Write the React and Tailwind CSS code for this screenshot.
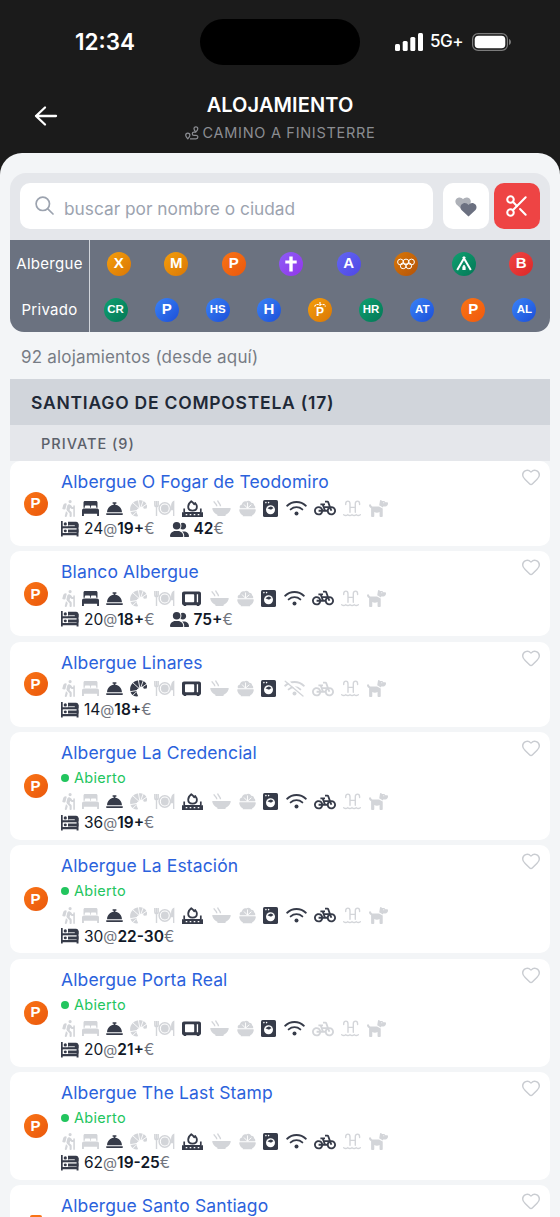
import { FaPersonHiking, FaBellConcierge, FaUserGroup, FaDog } from "react-icons/fa6";
import { MdPedalBike } from "react-icons/md";
import { Heart, Scissors } from "lucide-react";

const ALBERGUE = [
  { label: "X", color: "from-[#f59e0b] to-[#d97706]" },
  { label: "M", color: "from-[#f59e0b] to-[#d97706]" },
  { label: "P", color: "from-[#f97316] to-[#ea580c]" },
  { icon: "cross", color: "from-[#8b5cf6] to-[#9333ea]" },
  { label: "A", color: "from-[#6366f1] to-[#4f46e5]" },
  { icon: "rings", color: "from-[#d97706] to-[#b45309]" },
  { icon: "tent", color: "from-[#10a070] to-[#047857]" },
  { label: "B", color: "from-[#ef4444] to-[#dc2626]" },
];

const PRIVADO = [
  { label: "CR", color: "from-[#10a070] to-[#047857]" },
  { label: "P", color: "from-[#3b82f6] to-[#1d4ed8]" },
  { label: "HS", color: "from-[#3b82f6] to-[#1d4ed8]" },
  { label: "H", color: "from-[#3b82f6] to-[#1d4ed8]" },
  { icon: "parish", color: "from-[#f59e0b] to-[#d97706]" },
  { label: "HR", color: "from-[#10a070] to-[#047857]" },
  { label: "AT", color: "from-[#3b82f6] to-[#1d4ed8]" },
  { label: "P", color: "from-[#f97316] to-[#f05a0c]" },
  { label: "AL", color: "from-[#3b82f6] to-[#1d4ed8]" },
];

const PLACES = [
  { name: "Albergue O Fogar de Teodomiro", on: ["bed", "bell", "grill", "washer", "wifi", "bike"], beds: "24", price: "19+", room: "42" },
  { name: "Blanco Albergue", on: ["bed", "bell", "micro", "washer", "wifi", "bike"], beds: "20", price: "18+", room: "75+" },
  { name: "Albergue Linares", on: ["bell", "croissant", "micro", "washer"], noWifi: true, beds: "14", price: "18+" },
  { name: "Albergue La Credencial", open: true, on: ["bell", "grill", "washer", "wifi", "bike"], beds: "36", price: "19+" },
  { name: "Albergue La Estación", open: true, on: ["bell", "grill", "washer", "wifi", "bike"], beds: "30", price: "22-30" },
  { name: "Albergue Porta Real", open: true, on: ["bell", "micro", "washer", "wifi"], beds: "20", price: "21+" },
  { name: "Albergue The Last Stamp", open: true, on: ["bell", "grill", "washer", "wifi", "bike"], beds: "62", price: "19-25" },
];

function Bed() {
  return (
    <svg className="h-[17px] w-[17px]" viewBox="0 0 17 17" fill="currentColor">
      <path d="M3 1h11c.9 0 1.500.6 1.500 1.500v5.200h-1.300V6.500c0-.7-.4-1.100-1.100-1.100H10c-.7 0-1.100.4-1.100 1.100v1.200h-.8V6.500c0-.7-.4-1.100-1.100-1.100H3.900c-.7 0-1.100.4-1.100 1.100v1.200H1.500V2.500C1.500 1.600 2.100 1 3 1z" />
      <path d="M2 8.600h13c1.200 0 2 .8 2 2V16h-1.900v-2.200H1.900V16H0v-5.400c0-1.200.8-2 2-2z" />
    </svg>
  );
}

function Croissant() {
  return (
    <svg className="h-[17px] w-[17px]" viewBox="0 0 17 17" fill="currentColor">
      <path d="M8.200 16.300C3.500 17.200.3 13.800.1 9.500 0 4.300 4.300.3 9.300.2c3.700 0 6.700 1.800 7.600 5 .3 1.200.1 2.200-.3 3.200l-2.800.4C13.600 7 12 6.500 10.500 7L7.200 9.200C6.300 10.300 6.200 12 6.800 13z" />
      <path d="M10.300 9.500 2.500 2.500M10 9 8.200-1M10.500 8 13.500 0M12 7.300 17.500 3.500M8.500 10.200-.5 11.800M6 12.200 1.700 16.500" stroke="#fff" strokeWidth=".9" />
    </svg>
  );
}

function Plate() {
  return (
    <svg className="h-[17px] w-[21px]" viewBox="0 0 21 17" fill="none" stroke="currentColor">
      <circle cx="10.800" cy="8.500" r="5.700" strokeWidth="1.500" />
      <circle cx="10.800" cy="8.500" r="3.900" fill="currentColor" stroke="none" />
      <path d="M.8 1v4.200c0 1 .6 1.500 1.700 1.500s1.700-.5 1.700-1.500V1M2.500 1v15" strokeWidth="1.400" />
      <path d="M19.700 16V1.500c-1.300.7-2 2.500-2 5v3h2" fill="currentColor" strokeWidth="1.300" />
    </svg>
  );
}

function Grill() {
  return (
    <svg className="h-[17px] w-[21px]" viewBox="0 0 21 17">
      <path d="M9.300 1.200c1.300.9 2.200 1.900 2.900 3l1-1.200c1 1.200 1.700 2.500 1.700 3.700 0 2.400-1.800 3.900-4.300 3.900S6.200 9.100 6.200 6.700C6.200 4.800 7.600 2.500 9.300 1.200z" fill="none" stroke="currentColor" strokeWidth="1.800" strokeLinejoin="round" />
      <path d="M2.200 8.500v3.300c0 .7.400 1.100 1.100 1.100h14.400c.7 0 1.100-.4 1.100-1.100V8.500" fill="none" stroke="currentColor" strokeWidth="1.700" />
      <path fillRule="evenodd" d="M0 12.200h21V17H0zM3.700 14v1.300h1.600V14zm4 0v1.300h1.600V14zm4 0v1.300h1.600V14zm4 0v1.300h1.600V14z" fill="currentColor" />
    </svg>
  );
}

function Microwave() {
  return (
    <svg className="h-[17px] w-[19px]" viewBox="0 0 19 17" fill="currentColor">
      <path fillRule="evenodd" d="M2 1.500h15c1.100 0 2 .9 2 2v9.700c0 1-.7 1.700-1.600 1.900V16h-2.600v-.8H4.200v.8H1.600v-.9C.7 14.900 0 14.200 0 13.200V3.500c0-1.100.9-2 2-2zM4 4.300c-.6 0-1 .4-1 1v6c0 .6.400 1 1 1h7.200c.6 0 1-.4 1-1v-6c0-.6-.4-1-1-1zM14.800 4.300v8h1.300v-8z" />
    </svg>
  );
}

function Soup() {
  return (
    <svg className="h-[17px] w-[19px]" viewBox="0 0 19 17" fill="currentColor">
      <path d="M1 8h17c.6 0 .9.500.7 1-.8 2.800-2.500 4.800-5 5.800l-.3 1.300H5.600L5.300 14.800C2.800 13.800 1.100 11.800.3 9 .1 8.500.4 8 1 8z" />
      <path d="M2 1.200c0 2 2.800 2.200 2.800 5M5.700.5c0 2.200 2.800 2.800 2.800 5.700" fill="none" stroke="currentColor" strokeWidth="1.400" />
    </svg>
  );
}

function Salad() {
  return (
    <svg className="h-[17px] w-[17px]" viewBox="0 0 17 17" fill="currentColor">
      <path d="M.8 9.300h15.400c.4 0 .7.300.6.700-.3 2.400-1.600 4.300-3.600 5.300v1H3.800v-1C1.800 14.300.5 12.400.2 10c0-.4.200-.7.600-.7z" />
      <path d="M.9 8.200C.2 6.500 1.200 4.800 2.900 4.600 3.200 2.400 5 .9 7.100 1.400 9 .1 11.500.7 12.200 2.700c1.700-.2 3 1 2.800 2.600 1.100.6 1.500 1.800 1.100 2.900z" />
      <path d="M8.500 8.200V2.500M8.300 8 5 4.500M8.700 8 12.400 4.700" stroke="#fff" strokeWidth=".9" fill="none" />
    </svg>
  );
}

function Washer() {
  return (
    <svg className="h-[17px] w-[15px]" viewBox="0 0 15 17">
      <rect width="15" height="17" rx="1.600" fill="currentColor" />
      <circle cx="2.900" cy="2.600" r=".8" fill="#fff" />
      <circle cx="5.600" cy="2.600" r=".8" fill="#fff" />
      <circle cx="7.500" cy="9.800" r="4.500" fill="#fff" />
      <path d="M4.500 9.100c1.500-1 2.400.8 3.700.4 1.100-.4 1.200-1.300 2.300-1.300A3.300 3.300 0 0 0 4.500 9.100z" fill="currentColor" />
    </svg>
  );
}

function Wifi({ off }) {
  return (
    <svg className="h-[17px] w-[21px]" viewBox="0 0 21 17" fill="none" stroke="currentColor" strokeWidth="1.900" strokeLinecap="round">
      <path d="M1.200 5.700c5.200-4.900 13.400-4.900 18.600 0M4.700 9.400c3.300-3 8.300-3 11.600 0" />
      <circle cx="10.500" cy="13.600" r="2" fill="currentColor" stroke="none" />
      {off && <path d="M2.600.1 20.400 15.700" stroke="#fff" strokeWidth="2" />}
      {off && <path d="M1.200 1.200 19 16" strokeWidth="1.300" />}
    </svg>
  );
}

function Pool() {
  return (
    <svg className="h-[17px] w-[18px]" viewBox="0 0 18 17" fill="none" stroke="currentColor" strokeWidth="1.400" strokeLinecap="round">
      <path d="M2.700 4.500V3.800c0-3.600 4.300-3.600 4.300 0v8.400M12.300 12.200V3.800c0-3.600 4.300-3.600 4.300 0v.7M7 7.400h5.300" />
      <path d="M.7 14.700c1.400 1 2.700 1 4.100 0 1.400 1 2.800 1 4.200 0 1.400 1 2.800 1 4.200 0 1.400 1 2.700 1 4.100 0" />
    </svg>
  );
}

function BunkBed() {
  return (
    <svg className="h-[16px] w-[18px]" viewBox="0 0 18 16" fill="currentColor">
      <path d="M0 0h1.700v15.500H0z" />
      <path d="M1 5.300h16.500v2.200H1zM1 12h16.500v2.200H1zM15.600 3h1.900v12.500h-1.900z" />
      <path d="M7 .8h8c1.600 0 2.500.9 2.500 2.500v3H7zM7 8.300h10.500v3.200H7z" />
      <circle cx="4.300" cy="2.900" r="1.600" />
      <circle cx="4.300" cy="9.700" r="1.500" />
      <path d="M7.300 4.700h6.500M2 8h13.500" stroke="#fff" strokeWidth=".8" />
    </svg>
  );
}

// fixed order, every row shows all amenities and greys out what is missing
function Amenities({ on, noWifi }) {
  const tone = (key) => (on.includes(key) ? "text-[#363b49]" : "text-[#d3d5d9]");
  return (
    <div className="flex h-5 items-center gap-[7px] pl-[.5px]">
      <span className={tone("hiker")}><FaPersonHiking className="h-[17px] w-[13px]" /></span>
      <span className={tone("bed")}><Bed /></span>
      <span className={tone("bell")}><FaBellConcierge className="h-[17px] w-[17px]" /></span>
      <span className={tone("croissant")}><Croissant /></span>
      <span className={tone("plate")}><Plate /></span>
      {on.includes("micro") ? (
        <span className={tone("micro")}><Microwave /></span>
      ) : (
        <span className={tone("grill")}><Grill /></span>
      )}
      <span className={`ml-[2px] ${tone("soup")}`}><Soup /></span>
      <span className={`ml-px ${tone("salad")}`}><Salad /></span>
      <span className={tone("washer")}><Washer /></span>
      <span className={`ml-px ${tone("wifi")}`}><Wifi off={noWifi} /></span>
      <span className={tone("bike")}><MdPedalBike className="size-[22px]" /></span>
      <span className={tone("pool")}><Pool /></span>
      <span className={`ml-px ${tone("dog")}`}><FaDog className="h-[17px] w-[19px]" /></span>
    </div>
  );
}

function BadgeIcon({ name }) {
  if (name === "cross") {
    return (
      <svg className="h-4 w-4" viewBox="0 0 16 16" fill="#fff">
        <path d="M6.300.5h3.400v3.900h4v3.200h-4v8H6.300v-8h-4V4.400h4z" />
      </svg>
    );
  }
  if (name === "rings") {
    return (
      <svg className="h-3 w-[18px]" viewBox="0 0 18 12" fill="none" stroke="#fff" strokeWidth="1">
        <circle cx="3.500" cy="4" r="2.900" />
        <circle cx="9" cy="4" r="2.900" />
        <circle cx="14.500" cy="4" r="2.900" />
        <circle cx="6.200" cy="7.800" r="2.900" />
        <circle cx="11.800" cy="7.800" r="2.900" />
      </svg>
    );
  }
  if (name === "tent") {
    return (
      <svg className="h-[15px] w-4" viewBox="0 0 16 15" fill="none" stroke="#fff" strokeWidth="2">
        <path d="M1.200 14 8.900.8M7.100.8 14.800 14" />
        <path d="M6.800 14V11L8 9l1.200 2v3" fill="#fff" strokeWidth=".8" />
      </svg>
    );
  }
  return (
    <span className="flex flex-col items-center">
      <svg className="h-[5px] w-3" viewBox="0 0 12 5" fill="none" stroke="#fff" strokeWidth="1.200">
        <path d="M.5 4.500 2 2.500h8l1.500 2M6 0v4" strokeDasharray="2.200 .8" />
      </svg>
      <span className="text-[12px] leading-[11px]">P</span>
    </span>
  );
}

function Badge({ label, icon, color }) {
  return (
    <div className={`flex size-6 items-center justify-center rounded-full bg-linear-to-br font-['Liberation_Sans',sans-serif] font-bold text-white ${color} ${label && label.length > 1 ? "text-[11.500px]" : "text-[15px]"}`}>
      {icon ? <BadgeIcon name={icon} /> : label}
    </div>
  );
}

function Place({ place }) {
  return (
    <div className={`mb-[5.330px] flex shrink-0 rounded-[10px] bg-white ${place.open ? "h-[108px]" : "h-[85px]"}`}>
      <div className="flex w-[51px] items-center justify-center">
        <Badge label="P" color="from-[#f97316] to-[#ea580c]" />
      </div>
      <div className="flex-1 pt-[7px]">
        <h3 className="h-[27px] text-[17.500px] leading-[27px] tracking-[0.120px] text-[#2b62dc]">{place.name}</h3>
        {place.open && (
          <div className="flex h-[23px] items-center gap-[5px] pt-px text-[14.500px] tracking-[0.300px] text-[#22c55e]">
            <span className="size-2 rounded-full bg-[#22c55e]" />
            Abierto
          </div>
        )}
        <div className="pt-[3px]">
          <Amenities on={place.on} noWifi={place.noWifi} />
        </div>
        <div className="flex h-[22px] items-center text-[15.500px] text-[#111827]">
          <span className="mr-[5px] text-[#363b49]"><BunkBed /></span>
          {place.beds}
          <span className="text-[14.500px] text-[#71757e]">@</span>
          <b className="font-semibold">{place.price}</b>
          <span className="text-[#71757e]">€</span>
          {place.room && (
            <>
              <FaUserGroup className="mr-[5px] ml-[15px] h-[17px] w-[19px] text-[#363b49]" />
              <b className="font-semibold">{place.room}</b>
              <span className="text-[#71757e]">€</span>
            </>
          )}
        </div>
      </div>
      <Heart className="mt-[6px] mr-[9px] size-5 text-[#c9ccd1]" strokeWidth={1.7} />
    </div>
  );
}

export default function App() {
  return (
    <div className="flex h-[1217px] w-[560px] flex-col overflow-hidden bg-[#1b1b1b] font-[Inter,sans-serif]">
      <div className="flex h-[83px] shrink-0 items-center">
        <div className="w-[200px] pl-[75px] text-[22.500px] font-semibold text-white">12:34</div>
        <div className="h-[46px] w-40 rounded-full bg-black" />
        <div className="flex items-center pl-[35px]">
          <svg className="h-[18px] w-7" viewBox="0 0 28 18" fill="#fff">
            <rect y="11" width="5" height="7" rx="1.500" />
            <rect x="7.700" y="8" width="5" height="10" rx="1.500" />
            <rect x="15.300" y="4" width="5" height="14" rx="1.500" />
            <rect x="23" width="5" height="18" rx="1.500" />
          </svg>
          <span className="ml-[7px] w-[42px] pt-px text-[17px] font-medium tracking-[-0.500px] text-white">5G+</span>
          <svg className="h-[18px] w-[39px]" viewBox="0 0 39 18">
            <rect x=".6" y=".6" width="34.800" height="16.800" rx="5.500" fill="none" stroke="#7c7c7c" strokeWidth="1.200" />
            <rect x="2.700" y="2.700" width="30.600" height="12.600" rx="3.800" fill="#fff" />
            <path d="M37 6c2.600 1 2.600 5 0 6z" fill="#7c7c7c" />
          </svg>
        </div>
      </div>

      <header className="flex h-[70px] shrink-0 items-start">
        <div className="w-[100px] pt-[22px] pl-[34px]">
          <svg className="h-[22px] w-6" viewBox="0 0 24 22" fill="none" stroke="#fff" strokeWidth="2.300" strokeLinecap="round" strokeLinejoin="round">
            <path d="M11 2.500 2 11l9 8.500M2 11h20" />
          </svg>
        </div>
        <div className="w-[360px] pt-2 text-center">
          <h1 className="text-[20px] leading-7 font-semibold tracking-[0.100px] text-white">ALOJAMIENTO</h1>
          <div className="flex h-7 items-center justify-center gap-1 text-[14.500px] tracking-[0.700px] text-[#8b8d92]">
            <svg className="h-[14px] w-[14px]" viewBox="0 0 14 14" fill="none" stroke="currentColor" strokeWidth="1.200" strokeLinejoin="round">
              <path d="M2.800 12.800C1.500 11.300.7 10.200.7 9.200a2.100 2.100 0 0 1 4.200 0c0 1-.8 2.100-2.100 3.600z" />
              <path d="M10.800 6C9.600 4.700 9 3.700 9 2.800a1.900 1.900 0 0 1 3.800 0c0 .9-.7 1.900-2 3.200z" />
              <path d="M5 12.800h6c2.500 0 2.500-3.400 0-3.400H9c-2.300 0-2.300-3.200 0-3.200h1.800" />
            </svg>
            CAMINO A FINISTERRE
          </div>
        </div>
      </header>

      <main className="flex flex-1 flex-col rounded-t-[22px] bg-[#f3f5f7] px-[10px] pt-5">
        <div className="flex h-[67px] shrink-0 rounded-t-2xl bg-[#e5e7eb] p-[10px]">
          <div className="flex h-[46px] w-[413px] items-center rounded-[10px] bg-white pl-[15px] text-[17.300px] text-[#9ca3af]">
            <svg className="mr-[10px] mb-[1px] h-[19px] w-[19px]" viewBox="0 0 19 19" fill="none" stroke="currentColor" strokeWidth="1.700" strokeLinecap="round">
              <circle cx="7.800" cy="7.800" r="6.700" />
              <path d="M12.800 12.800 18 18" />
            </svg>
            <span className="pt-[5px]">buscar por nombre o ciudad</span>
          </div>
          <div className="ml-[10px] flex size-[46px] items-center justify-center rounded-[10px] bg-white">
            <svg className="mt-px h-5 w-[22px]" viewBox="0 0 22 20">
              <path d="M8 13.500 1.300 7.200C-.5 5 .4 1.500 3.200.7 5.200.1 7 .9 8 2.300 9.200.9 11 .1 13 .7c2.800.8 3.700 4.300 1.900 6.500z" fill="#aeb1b8" />
              <path d="M13.500 19.500 6.500 13C4.600 10.800 5.400 7.200 8.500 6.200c2-.6 4 .3 5 1.900 1-1.600 3-2.500 5-1.900 3.100 1 3.900 4.600 2 6.800z" fill="#6b7080" />
            </svg>
          </div>
          <div className="ml-[5px] flex size-[46px] items-center justify-center rounded-[10px] bg-[#ee4444] text-white">
            <Scissors className="size-[26px]" strokeWidth={1.9} />
          </div>
        </div>

        <div className="flex h-[92px] shrink-0 overflow-hidden rounded-b-[14px] bg-[#6b7280]">
          <div className="w-[80px] border-r border-[#d1d5db] text-center text-[15px] tracking-[0.300px] text-white">
            <div className="h-[46px] leading-[48px]">Albergue</div>
            <div className="h-[46px] leading-[47px]">Privado</div>
          </div>
          <div className="flex-1">
            <div className="flex h-[46px] items-center justify-around pt-px">
              {ALBERGUE.map((b, i) => <Badge key={i} {...b} />)}
            </div>
            <div className="flex h-[46px] items-center justify-around pt-px">
              {PRIVADO.map((b, i) => <Badge key={i} {...b} />)}
            </div>
          </div>
        </div>

        <p className="h-[47px] shrink-0 pl-[11px] text-[17px] leading-[50px] tracking-[0.180px] text-[#777c85]">92 alojamientos (desde aquí)</p>

        <h2 className="h-[46px] shrink-0 bg-[#d1d5db] pl-[21px] text-[17.500px] leading-[48px] font-semibold tracking-[0.770px] text-[#1f2937]">
          SANTIAGO DE COMPOSTELA (17)
        </h2>
        <div className="h-9 shrink-0 bg-[#e5e7eb] pl-[31px] text-[14.500px] leading-[37px] font-medium tracking-[1px] text-[#5b606a]">
          PRIVATE (9)
        </div>

        <div className="flex h-[756px] flex-col overflow-hidden">
          {PLACES.map((place) => <Place key={place.name} place={place} />)}
          {/* last card runs off the bottom of the screen, only its heading is in view */}
          <div className="flex h-8 shrink-0 rounded-t-[10px] bg-white">
            <div className="flex w-[51px] items-end justify-center">
              <div className="h-[2px] w-3 rounded-t-full bg-[#f97316]" />
            </div>
            <h3 className="flex-1 pt-[7px] text-[17.500px] leading-[27px] tracking-[0.120px] text-[#2b62dc]">Albergue Santo Santiago</h3>
            <Heart className="mt-[6px] mr-[9px] size-5 text-[#c9ccd1]" strokeWidth={1.7} />
          </div>
        </div>
      </main>
    </div>
  );
}
